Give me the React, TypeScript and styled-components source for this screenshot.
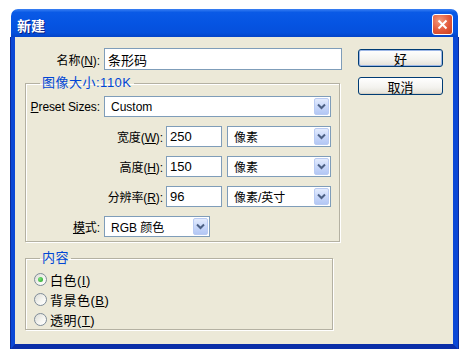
import styled, { createGlobalStyle } from 'styled-components'

const GlobalStyle = createGlobalStyle`
  body {
    margin: 0;
    background: #fff;
    font-family: Tahoma, "Liberation Sans", "Noto Sans CJK SC", sans-serif;
    font-size: 12px;
    color: #000;
  }
`

const Window = styled('div')`
  margin: 9px 0 0 11px;
  width: 447px;
  height: 340px;
  display: flex;
  flex-direction: column;
`

const TitleBar = styled('div')`
  height: 28px;
  flex: none;
  box-sizing: border-box;
  padding: 3px 5px 0 6px;
  display: flex;
  align-items: center;
  justify-content: space-between;
  border-radius: 7px 7px 0 0;
  background: linear-gradient(
    to bottom,
    #3a80f3 0%,
    #0a5ae6 12%,
    #0554e2 50%,
    #0550dc 85%,
    #0344c8 100%
  );
`

const Title = styled('span')`
  color: #fff;
  font-weight: bold;
  font-size: 14px;
  font-family: "Noto Sans CJK SC", sans-serif;
  text-shadow: 1px 1px 0 #0a1e80;
`

const CloseButton = styled('div')`
  width: 21px;
  height: 21px;
  box-sizing: border-box;
  border: 1px solid #fff;
  border-radius: 3px;
  background: radial-gradient(circle at 35% 30%, #f39a7c 0%, #e2583a 55%, #c9401f 100%);
  display: flex;
  align-items: center;
  justify-content: center;
`

const Frame = styled('div')`
  flex: 1;
  display: flex;
  border-left: 4px solid #0b48d6;
  border-right: 5px solid #0b48d6;
  border-bottom: 5px solid #0a2ea8;
  box-shadow: -1px 0 0 #0a2a9a, 1px 0 0 #0a2a9a, 0 1px 0 #001a80;
`

const Body = styled('div')`
  flex: 1;
  background: #ece9d8;
  padding-top: 11px;
  display: flex;
  gap: 16px;
`

const MainColumn = styled('div')`
  width: 327px;
  display: flex;
  flex-direction: column;
`

const SideColumn = styled('div')`
  margin-top: 1px;
  display: flex;
  flex-direction: column;
  gap: 10px;
`

const Row = styled('div')<{ $h?: number }>`
  display: flex;
  align-items: center;
  height: ${(p) => p.$h ?? 21}px;
`

const Label = styled('label')<{ $w: number; $gap?: number }>`
  width: ${(p) => p.$w}px;
  margin-right: ${(p) => p.$gap ?? 4}px;
  flex: none;
  text-align: right;
  white-space: nowrap;
  letter-spacing: -0.1px;
`

const TextBox = styled('div')<{ $w: number; $h?: number }>`
  width: ${(p) => p.$w}px;
  height: ${(p) => p.$h ?? 21}px;
  box-sizing: border-box;
  border: 1px solid #7f9db9;
  background: #fff;
  padding: 0 3px;
  display: flex;
  align-items: center;
  font-size: 13px;
`

const Select = styled(TextBox)`
  padding: 0 1px 0 6px;
  justify-content: space-between;
  font-size: 12px;
`

const ArrowButton = styled('div')`
  width: 15px;
  height: 17px;
  box-sizing: border-box;
  border: 1px solid #b9cbf3;
  border-radius: 2px;
  background: linear-gradient(to bottom, #e3ebfd 0%, #c9d8fa 50%, #b3c7f4 100%);
  display: flex;
  align-items: center;
  justify-content: center;
`

const Group = styled('fieldset')<{ $w: number; $top: number }>`
  margin: ${(p) => p.$top}px 0 0 10px;
  width: ${(p) => p.$w}px;
  box-sizing: border-box;
  padding: 0;
  border: 1px solid #b4b1a2;
  box-shadow: inset 1px 1px 0 #fff, 1px 1px 0 #fff;
  display: flex;
  flex-direction: column;
`

const Legend = styled('legend')`
  margin-left: 14px;
  padding: 0 2px;
  color: #0046d5;
  font-size: 13px;
  line-height: 14px;
  letter-spacing: 0.5px;
`

const SizeRows = styled('div')`
  padding: 6px 0 4px;
  display: flex;
  flex-direction: column;
  gap: 9px;
`

const ValueGap = styled('span')`
  width: 5px;
  flex: none;
`

const RadioRows = styled('div')`
  padding: 4px 0 0 8px;
  display: flex;
  flex-direction: column;
`

const RadioCircle = styled('span')<{ $checked?: boolean }>`
  width: 13px;
  height: 13px;
  box-sizing: border-box;
  border-radius: 50%;
  border: 1px solid #7f8c98;
  background: linear-gradient(135deg, #dcdcd6 0%, #f6f6f2 60%, #ffffff 100%);
  margin-right: 3px;
  display: flex;
  align-items: center;
  justify-content: center;

  &::after {
    content: '';
    display: ${(p) => (p.$checked ? 'block' : 'none')};
    width: 5px;
    height: 5px;
    border-radius: 50%;
    background: radial-gradient(circle at 35% 35%, #7be07b, #21a121);
  }
`

const RadioLabel = styled('span')`
  font-size: 13px;
  letter-spacing: 0.5px;
`

const Button = styled('div')<{ $default?: boolean }>`
  width: 85px;
  height: 18px;
  box-sizing: border-box;
  border: 1px solid #003c74;
  border-radius: 3px;
  background: linear-gradient(to bottom, #ffffff 0%, #f3f2ee 60%, #e3e0d6 100%);
  box-shadow: ${(p) => (p.$default ? 'inset 0 0 0 1px #9cb6e6' : 'inset 0 -1px 0 #d6d0c5')};
  display: flex;
  align-items: center;
  justify-content: center;
  font-size: 13px;
  font-family: "Noto Sans CJK SC", sans-serif;
`

function Arrow() {
  return (
    <ArrowButton>
      <svg width="9" height="7" viewBox="0 0 9 7">
        <polyline points="1,1.5 4.5,5 8,1.5" fill="none" stroke="#4d6185" strokeWidth="2" />
      </svg>
    </ArrowButton>
  )
}

function Dropdown({ w, value }: { w: number; value: string }) {
  return (
    <Select $w={w}>
      <span>{value}</span>
      <Arrow />
    </Select>
  )
}

function Radio({ checked, children }: { checked?: boolean; children: React.ReactNode }) {
  return (
    <Row $h={20}>
      <RadioCircle $checked={checked} />
      <RadioLabel>{children}</RadioLabel>
    </Row>
  )
}

export default function App() {
  return (
    <>
      <GlobalStyle />
      <Window>
        <TitleBar>
          <Title>新建</Title>
          <CloseButton>
            <svg width="11" height="11" viewBox="0 0 11 11">
              <path d="M1.5 1.5 L9.5 9.5 M9.5 1.5 L1.5 9.5" stroke="#fff" strokeWidth="2" />
            </svg>
          </CloseButton>
        </TitleBar>
        <Frame>
          <Body>
            <MainColumn>
              <Row $h={22}>
                <Label $w={85}>
                  名称(<u>N</u>):
                </Label>
                <TextBox $w={238} $h={22}>条形码</TextBox>
              </Row>

              <Group $w={315} $top={6}>
                <Legend>图像大小:110K</Legend>
                <SizeRows>
                  <Row>
                    <Label $w={74}>
                      <u>P</u>reset Sizes:
                    </Label>
                    <Dropdown w={227} value="Custom" />
                  </Row>
                  <Row>
                    <Label $w={137} $gap={3}>
                      宽度(<u>W</u>):
                    </Label>
                    <TextBox $w={56}>250</TextBox>
                    <ValueGap />
                    <Dropdown w={104} value="像素" />
                  </Row>
                  <Row>
                    <Label $w={137} $gap={3}>
                      高度(<u>H</u>):
                    </Label>
                    <TextBox $w={56}>150</TextBox>
                    <ValueGap />
                    <Dropdown w={104} value="像素" />
                  </Row>
                  <Row>
                    <Label $w={137} $gap={3}>
                      分辨率(<u>R</u>):
                    </Label>
                    <TextBox $w={56}>96</TextBox>
                    <ValueGap />
                    <Dropdown w={104} value="像素/英寸" />
                  </Row>
                  <Row>
                    <Label $w={74}>
                      <u>模</u>式:
                    </Label>
                    <Dropdown w={106} value="RGB 颜色" />
                  </Row>
                </SizeRows>
              </Group>

              <Group $w={308} $top={9}>
                <Legend>内容</Legend>
                <RadioRows>
                  <Radio checked>
                    白色(<u>I</u>)
                  </Radio>
                  <Radio>
                    背景色(<u>B</u>)
                  </Radio>
                  <Radio>
                    透明(<u>T</u>)
                  </Radio>
                </RadioRows>
              </Group>
            </MainColumn>

            <SideColumn>
              <Button $default>好</Button>
              <Button>取消</Button>
            </SideColumn>
          </Body>
        </Frame>
      </Window>
    </>
  )
}
